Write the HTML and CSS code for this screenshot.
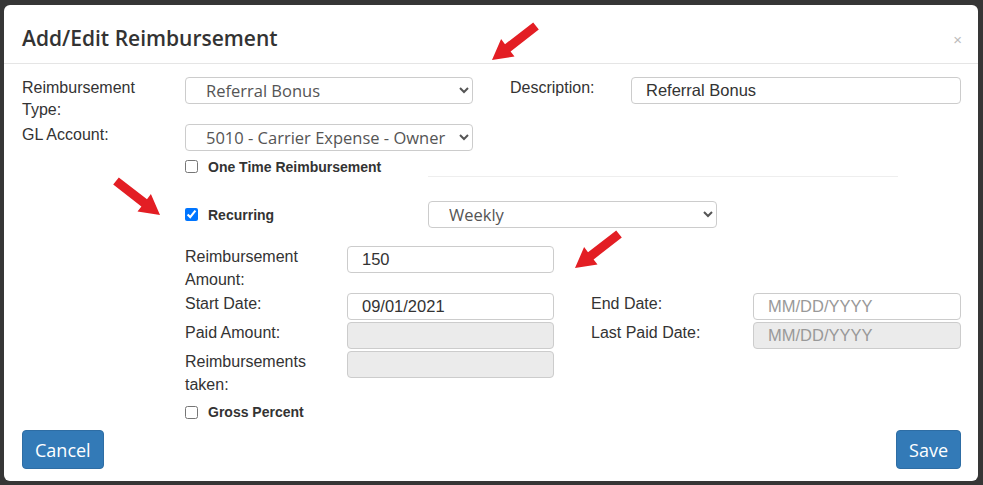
FILE: index.html
```html
<!DOCTYPE html>
<html lang="en">
<head>
  <meta charset="UTF-8">
  <title>Add/Edit Reimbursement</title>
  <link rel="stylesheet" href="styles.css">
</head>
<body>

  <div class="modal">
    <div class="modal-header">
      <h4 class="modal-title">Add/Edit Reimbursement</h4>
      <span class="close">&times;</span>
    </div>

    <div class="modal-body">
      <div class="top-grid">
        <label class="lbl">Reimbursement Type:</label>
        <select class="ctl sel">
          <option>Referral Bonus</option>
        </select>
        <span></span>
        <label class="lbl">Description:</label>
        <input class="ctl txt" type="text" value="Referral Bonus">

        <label class="lbl">GL Account:</label>
        <select class="ctl sel">
          <option>5010 - Carrier Expense - Owner Operator</option>
        </select>
      </div>

      <div class="check-row one-time">
        <input type="checkbox" id="onetime">
        <label for="onetime">One Time Reimbursement</label>
      </div>
      <hr class="split">

      <div class="recurring-row">
        <div class="check-row">
          <input type="checkbox" id="recurring" checked>
          <label for="recurring">Recurring</label>
        </div>
        <select class="ctl sel freq">
          <option>Weekly</option>
        </select>
      </div>

      <div class="detail-grid">
        <label class="lbl">Reimbursement Amount:</label>
        <input class="ctl txt" type="text" value="150">
        <span class="fill"></span>

        <label class="lbl">Start Date:</label>
        <input class="ctl txt" type="text" value="09/01/2021">
        <span></span>
        <label class="lbl">End Date:</label>
        <input class="ctl txt" type="text" placeholder="MM/DD/YYYY">

        <label class="lbl">Paid Amount:</label>
        <input class="ctl txt" type="text" disabled>
        <span></span>
        <label class="lbl">Last Paid Date:</label>
        <input class="ctl txt" type="text" placeholder="MM/DD/YYYY" disabled>

        <label class="lbl">Reimbursements taken:</label>
        <input class="ctl txt" type="text" disabled>
        <span class="fill"></span>
      </div>

      <div class="check-row gross">
        <input type="checkbox" id="gross">
        <label for="gross">Gross Percent</label>
      </div>

      <div class="modal-footer">
        <button class="btn">Cancel</button>
        <button class="btn">Save</button>
      </div>
    </div>
  </div>

  <!-- annotation arrows -->
  <svg class="arrow arrow-1" width="50" height="40" viewBox="0 0 50 40"><polygon points="43.2,0.4 48.8,7.6 20.6,29.4 24.5,34.5 2,38 11.1,17.1 15,22.2"/></svg>
  <svg class="arrow arrow-2" width="50" height="40" viewBox="0 0 50 40"><polygon points="43.2,0.4 48.8,7.6 20.6,29.4 24.5,34.5 2,38 11.1,17.1 15,22.2"/></svg>
  <svg class="arrow arrow-3" width="50" height="40" viewBox="0 0 50 40"><polygon points="43.2,0.4 48.8,7.6 20.6,29.4 24.5,34.5 2,38 11.1,17.1 15,22.2"/></svg>

</body>
</html>
```

FILE: styles.css
```css
body {
  margin: 0;
  background: #363636;
  font-family: 'Liberation Sans', Arial, sans-serif;
  color: #333;
}

.modal {
  margin: 5px 0 0 4px;
  width: 974px;
  height: 476px;
  background: #fff;
  border-radius: 6px;
  box-sizing: border-box;
}

.modal-header {
  height: 59px;
  box-sizing: border-box;
  padding: 22px 18px 0;
  border-bottom: 1px solid #e5e5e5;
  display: flex;
  justify-content: space-between;
}

.modal-title {
  margin: 0;
  font-family: 'Open Sans', sans-serif;
  font-size: 21px;
  font-weight: 600;
  line-height: 22px;
  color: #333;
}

.close {
  font-size: 15px;
  line-height: 15px;
  color: #bbb;
  margin-top: 5px;
  margin-right: -2px;
}

.modal-body {
  padding: 13px 17px 0 18px;
}

.lbl {
  font-size: 16px;
  line-height: 22px;
  color: #333;
  padding-right: 16px;
}

.ctl {
  height: 27px;
  box-sizing: border-box;
  border: 1px solid #ccc;
  border-radius: 4px;
  background: #fff;
  margin: 0;
}

.sel {
  font-family: 'Open Sans', sans-serif;
  font-size: 16.5px;
  color: #555;
  padding: 0 6px 0 16px;
}

.txt {
  font-family: 'Liberation Sans', Arial, sans-serif;
  font-size: 16.5px;
  color: #333;
  padding: 0 14px;
}

.txt::placeholder {
  color: #999;
}

.txt:disabled {
  background: #ebebeb;
}

.top-grid {
  display: grid;
  grid-template-columns: 163px 288px 37px 121px 330px;
  row-gap: 3px;
}

.check-row {
  display: flex;
  align-items: center;
  height: 19px;
}

.check-row input {
  width: 13px;
  height: 13px;
  margin: 0 10px 0 0;
}

.check-row label {
  font-size: 14px;
  font-weight: bold;
  color: #333;
}

.one-time {
  margin: 6px 0 0 163px;
}

.split {
  margin: 0 0 0 406px;
  width: 470px;
  border: 0;
  border-top: 1px solid #eee;
}

.recurring-row {
  display: flex;
  align-items: center;
  margin: 24px 0 0 163px;
}

.recurring-row .check-row {
  width: 243px;
}

.freq {
  width: 289px;
}

.detail-grid {
  display: grid;
  grid-template-columns: 162px 207px 37px 162px 208px;
  row-gap: 2px;
  margin: 18px 0 0 163px;
}

.detail-grid .lbl {
  line-height: 22.5px;
}

.detail-grid .fill {
  grid-column: span 3;
}

.gross {
  margin: 5px 0 0 163px;
  height: 22px;
}

.modal-footer {
  display: flex;
  justify-content: space-between;
  margin-top: 7px;
}

.btn {
  height: 39px;
  padding: 0 12px;
  font-family: 'Open Sans', sans-serif;
  font-size: 18px;
  color: #fff;
  background: #337ab7;
  border: 1px solid #2e6da4;
  border-radius: 4px;
}

.arrow {
  position: absolute;
  fill: #e31e24;
}

.arrow-1 {
  left: 490px;
  top: 22px;
}

.arrow-2 {
  left: 112px;
  top: 177px;
  transform: scaleX(-1);
}

.arrow-3 {
  left: 573px;
  top: 230px;
}
```
